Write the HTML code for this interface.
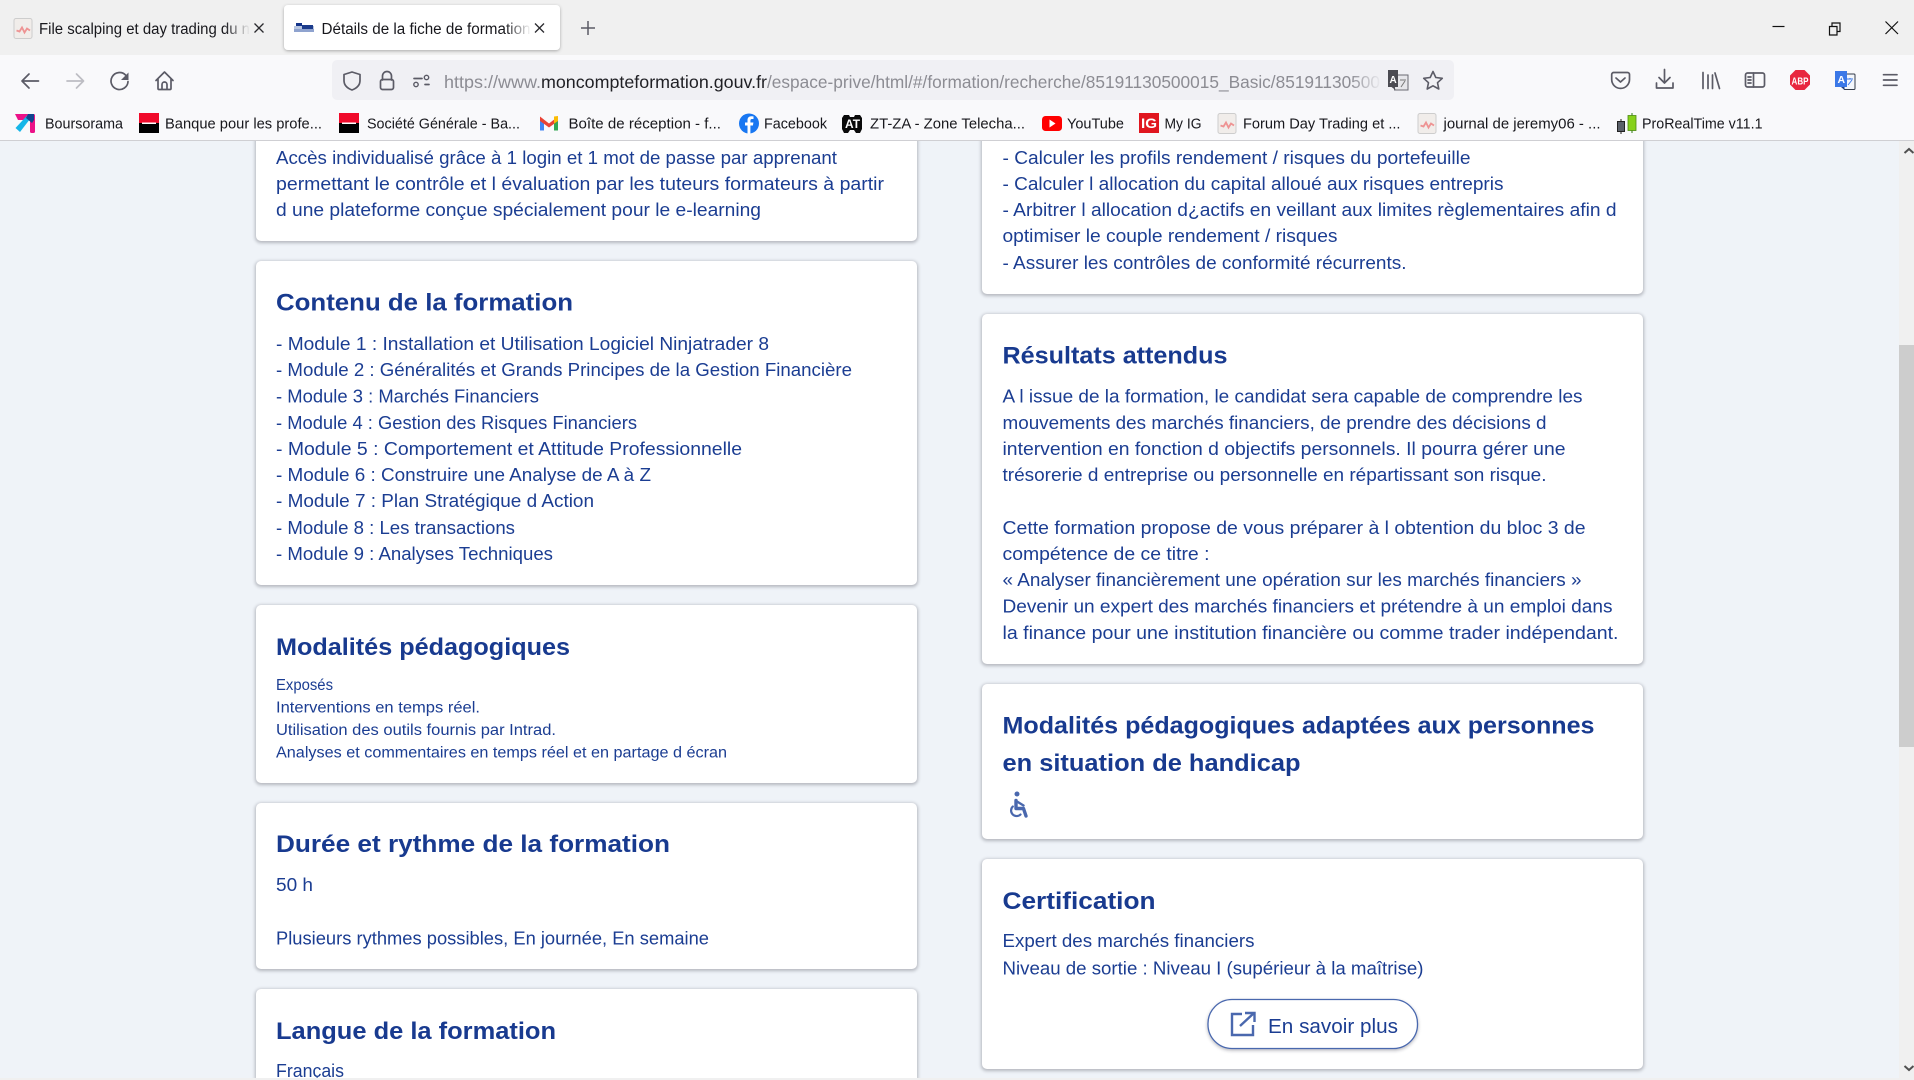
<!DOCTYPE html>
<html lang="fr"><head><meta charset="utf-8"><title>Détails de la fiche de formation</title>
<style>
html,body{margin:0;padding:0;width:1914px;height:1080px;overflow:hidden;background:#eff3f8;font-family:"Liberation Sans",sans-serif}
#p{position:relative;width:1914px;height:1080px;overflow:hidden}
.c{position:absolute;background:#fff;border-radius:5px;box-shadow:0 1px 3px 1px rgba(60,60,70,.32)}
svg#o{position:absolute;left:0;top:0}
text{font-family:"Liberation Sans",sans-serif}
.b text{font-size:18px;fill:#1b3d92}
.s text{font-size:15.5px;fill:#1b3d92}
.h text{font-size:24px;font-weight:bold;fill:#183a8f}
.m text{font-size:15px;fill:#17171c}
.i{fill:none;stroke:#5b5b66;stroke-width:1.7;stroke-linecap:round;stroke-linejoin:round}
.w{fill:none;stroke:#111;stroke-width:1.2}
</style></head><body><div id="p">
<div class="c" style="left:256px;top:120px;width:661px;height:121px"></div>
<div class="c" style="left:256px;top:261px;width:661px;height:324px"></div>
<div class="c" style="left:256px;top:605px;width:661px;height:178px"></div>
<div class="c" style="left:256px;top:803px;width:661px;height:166px"></div>
<div class="c" style="left:256px;top:989px;width:661px;height:89px;border-radius:5px 5px 0 0"></div>
<div class="c" style="left:982px;top:120px;width:661px;height:174px"></div>
<div class="c" style="left:982px;top:314px;width:661px;height:350px"></div>
<div class="c" style="left:982px;top:684px;width:661px;height:155px"></div>
<div class="c" style="left:982px;top:859px;width:661px;height:210px"></div>
<svg id="o" width="1914" height="1080" viewBox="0 0 1914 1080" xmlns="http://www.w3.org/2000/svg">
<defs>
<linearGradient id="f1" x1="0" x2="1"><stop offset="0" stop-color="#f0f0f0" stop-opacity="0"/><stop offset="1" stop-color="#f0f0f0"/></linearGradient>
<linearGradient id="f2" x1="0" x2="1"><stop offset="0" stop-color="#fff" stop-opacity="0"/><stop offset="1" stop-color="#fff"/></linearGradient>
<linearGradient id="f3" x1="0" x2="1"><stop offset="0" stop-color="#f0f0f4" stop-opacity="0"/><stop offset="1" stop-color="#f0f0f4"/></linearGradient>
<filter id="ts" x="-5%" y="-20%" width="110%" height="150%"><feDropShadow dx="0" dy="1" stdDeviation="1.5" flood-color="#000" flood-opacity=".3"/></filter>
<filter id="bs" x="-5%" y="-20%" width="110%" height="150%"><feDropShadow dx="0" dy="1.5" stdDeviation="1.5" flood-color="#334" flood-opacity=".35"/></filter>
<g id="chart"><rect x="0" y="0" width="18" height="20" rx="2" fill="#f1edea" stroke="#cdcdcd"/><path d="M2.500 12l3 1 2.500-4 2.500 5 2.500-4 3 2" fill="none" stroke="#ee9393" stroke-width="1.800"/></g>
</defs>

<!-- contenu gauche -->
<g class="b">
<text x="276" y="164" textLength="561" lengthAdjust="spacingAndGlyphs">Accès individualisé grâce à 1 login et 1 mot de passe par apprenant</text>
<text x="276" y="190" textLength="608" lengthAdjust="spacingAndGlyphs">permettant le contrôle et l évaluation par les tuteurs formateurs à partir</text>
<text x="276" y="216" textLength="485" lengthAdjust="spacingAndGlyphs">d une plateforme conçue spécialement pour le e-learning</text>
<text x="276" y="350" textLength="493" lengthAdjust="spacingAndGlyphs">- Module 1 : Installation et Utilisation Logiciel Ninjatrader 8</text>
<text x="276" y="376" textLength="576" lengthAdjust="spacingAndGlyphs">- Module 2 : Généralités et Grands Principes de la Gestion Financière</text>
<text x="276" y="402.500" textLength="263" lengthAdjust="spacingAndGlyphs">- Module 3 : Marchés Financiers</text>
<text x="276" y="429" textLength="361" lengthAdjust="spacingAndGlyphs">- Module 4 : Gestion des Risques Financiers</text>
<text x="276" y="455" textLength="466" lengthAdjust="spacingAndGlyphs">- Module 5 : Comportement et Attitude Professionnelle</text>
<text x="276" y="481" textLength="375" lengthAdjust="spacingAndGlyphs">- Module 6 : Construire une Analyse de A à Z</text>
<text x="276" y="507" textLength="318" lengthAdjust="spacingAndGlyphs">- Module 7 : Plan Stratégique d Action</text>
<text x="276" y="534" textLength="239" lengthAdjust="spacingAndGlyphs">- Module 8 : Les transactions</text>
<text x="276" y="560" textLength="277" lengthAdjust="spacingAndGlyphs">- Module 9 : Analyses Techniques</text>
<text x="276" y="891" textLength="37" lengthAdjust="spacingAndGlyphs">50 h</text>
<text x="276" y="944.500" textLength="433" lengthAdjust="spacingAndGlyphs">Plusieurs rythmes possibles, En journée, En semaine</text>
<text x="276" y="1077" textLength="68" lengthAdjust="spacingAndGlyphs">Français</text>
</g>
<g class="s">
<text x="276" y="690" textLength="57" lengthAdjust="spacingAndGlyphs">Exposés</text>
<text x="276" y="712.500" textLength="204" lengthAdjust="spacingAndGlyphs">Interventions en temps réel.</text>
<text x="276" y="735" textLength="280" lengthAdjust="spacingAndGlyphs">Utilisation des outils fournis par Intrad.</text>
<text x="276" y="757.500" textLength="451" lengthAdjust="spacingAndGlyphs">Analyses et commentaires en temps réel et en partage d écran</text>
</g>
<g class="h">
<text x="276" y="310.500" textLength="297" lengthAdjust="spacingAndGlyphs">Contenu de la formation</text>
<text x="276" y="655" textLength="294" lengthAdjust="spacingAndGlyphs">Modalités pédagogiques</text>
<text x="276" y="852" textLength="394" lengthAdjust="spacingAndGlyphs">Durée et rythme de la formation</text>
<text x="276" y="1039" textLength="280" lengthAdjust="spacingAndGlyphs">Langue de la formation</text>
</g>

<!-- contenu droite -->
<g class="b">
<text x="1002.500" y="164" textLength="468" lengthAdjust="spacingAndGlyphs">- Calculer les profils rendement / risques du portefeuille</text>
<text x="1002.500" y="190" textLength="501" lengthAdjust="spacingAndGlyphs">- Calculer l allocation du capital alloué aux risques entrepris</text>
<text x="1002.500" y="216" textLength="614" lengthAdjust="spacingAndGlyphs">- Arbitrer l allocation d¿actifs en veillant aux limites règlementaires afin d</text>
<text x="1002.500" y="242" textLength="335" lengthAdjust="spacingAndGlyphs">optimiser le couple rendement / risques</text>
<text x="1002.500" y="269" textLength="404" lengthAdjust="spacingAndGlyphs">- Assurer les contrôles de conformité récurrents.</text>
<text x="1002.500" y="402.500" textLength="580" lengthAdjust="spacingAndGlyphs">A l issue de la formation, le candidat sera capable de comprendre les</text>
<text x="1002.500" y="429" textLength="544" lengthAdjust="spacingAndGlyphs">mouvements des marchés financiers, de prendre des décisions d</text>
<text x="1002.500" y="455" textLength="563" lengthAdjust="spacingAndGlyphs">intervention en fonction d objectifs personnels. Il pourra gérer une</text>
<text x="1002.500" y="481" textLength="544" lengthAdjust="spacingAndGlyphs">trésorerie d entreprise ou personnelle en répartissant son risque.</text>
<text x="1002.500" y="534" textLength="583" lengthAdjust="spacingAndGlyphs">Cette formation propose de vous préparer à l obtention du bloc 3 de</text>
<text x="1002.500" y="560" textLength="207" lengthAdjust="spacingAndGlyphs">compétence de ce titre :</text>
<text x="1002.500" y="586" textLength="579" lengthAdjust="spacingAndGlyphs">« Analyser financièrement une opération sur les marchés financiers »</text>
<text x="1002.500" y="612.500" textLength="610" lengthAdjust="spacingAndGlyphs">Devenir un expert des marchés financiers et prétendre à un emploi dans</text>
<text x="1002.500" y="639" textLength="616" lengthAdjust="spacingAndGlyphs">la finance pour une institution financière ou comme trader indépendant.</text>
<text x="1002.500" y="947" textLength="252" lengthAdjust="spacingAndGlyphs">Expert des marchés financiers</text>
<text x="1002.500" y="974.500" textLength="421" lengthAdjust="spacingAndGlyphs">Niveau de sortie : Niveau I (supérieur à la maîtrise)</text>
</g>
<g class="h">
<text x="1002.500" y="363.500" textLength="225" lengthAdjust="spacingAndGlyphs">Résultats attendus</text>
<text x="1002.500" y="733.500" textLength="592" lengthAdjust="spacingAndGlyphs">Modalités pédagogiques adaptées aux personnes</text>
<text x="1002.500" y="771" textLength="298" lengthAdjust="spacingAndGlyphs">en situation de handicap</text>
<text x="1002.500" y="909" textLength="153" lengthAdjust="spacingAndGlyphs">Certification</text>
</g>
<!-- handicap -->
<g fill="none" stroke="#4a68ae" stroke-linecap="round" stroke-linejoin="round">
<circle cx="1017" cy="794" r="2.500" fill="#4a68ae" stroke="none"/>
<path stroke-width="3.400" d="M1016 800.500v8h7.500l2.500 7.500"/>
<path stroke-width="2.400" d="M1017 801.500l6.500 4"/>
<path stroke-width="2.200" d="M1012.800 806.500a5.500 5.500 0 1 0 7.700 8"/>
</g>
<!-- bouton -->
<rect x="1208" y="999.500" width="209.500" height="49" rx="24" fill="#fff" stroke="#4a68ae" stroke-width="1.300" filter="url(#bs)"/>
<g fill="none" stroke="#4a68ae" stroke-width="2.400"><path d="M1242 1014h-10v21h21v-10"/><path d="M1240 1026l14-13M1245 1013h9.500v9"/></g>
<text x="1268" y="1033" font-size="20" fill="#1b3d92" textLength="130" lengthAdjust="spacingAndGlyphs">En savoir plus</text>

<!-- scrollbar -->
<rect x="1899" y="141" width="15" height="939" fill="#f0f0f0"/>
<rect x="1899" y="345" width="15" height="402" fill="#cdcdcd"/>
<path d="M1904.500 153l4.500-4 4.500 4" fill="none" stroke="#505050" stroke-width="2"/>
<path d="M1904.500 1066l4.500 4 4.500-4" fill="none" stroke="#505050" stroke-width="2"/>
<rect x="0" y="1078" width="1914" height="2" fill="#f0f0f0"/>

<!-- barre d'onglets -->
<rect x="0" y="0" width="1914" height="55" fill="#f0f0f0"/>
<use href="#chart" x="14" y="18.500"/>
<text x="39" y="34" font-size="15.500" fill="#17171c" textLength="211" lengthAdjust="spacingAndGlyphs">File scalping et day trading du n</text>
<rect x="225" y="15" width="25" height="26" fill="url(#f1)"/>
<path d="M254.500 23.500l9 9M263.500 23.500l-9 9" stroke="#2a2a2e" stroke-width="1.300"/>
<rect x="284" y="5" width="276" height="45" rx="4" fill="#fff" filter="url(#ts)"/>
<rect x="294" y="26" width="20" height="3" fill="#b9c6e0"/><rect x="294" y="29" width="20" height="3" fill="#8fa3cf"/><rect x="296" y="23" width="6" height="3" fill="#14348a"/><rect x="302" y="25" width="11" height="4" fill="#1c3c8c"/>
<text x="321.500" y="34" font-size="15.500" fill="#17171c" textLength="209" lengthAdjust="spacingAndGlyphs">Détails de la fiche de formation</text>
<rect x="505" y="15" width="26" height="26" fill="url(#f2)"/>
<path d="M535 23.500l9 9M544 23.500l-9 9" stroke="#2a2a2e" stroke-width="1.300"/>
<path d="M588 21v14M581 28h14" stroke="#5b5b66" stroke-width="1.500"/>
<!-- fenêtre -->
<path d="M1772.500 26.500h12" stroke="#111" stroke-width="1.200"/>
<path class="w" d="M1829.500 26.500h7.500v8.500h-7.500zM1832 26.500v-3.500h8v8.500h-3"/>
<path d="M1885.500 21.500l12.500 12.500M1898 21.500l-12.500 12.500" stroke="#111" stroke-width="1.200"/>

<!-- barre d'outils -->
<rect x="0" y="55" width="1914" height="85" fill="#f9f9fb"/>
<rect x="0" y="140" width="1914" height="1" fill="#cfcfd3"/>
<path class="i" d="M38.500 81H22M29 74l-7 7 7 7"/>
<path class="i" style="stroke:#bdbdc3" d="M67 81h16.500M76.500 74l7 7-7 7"/>
<path class="i" d="M128 81.500a8.500 8.500 0 1 1-2.500-6.500"/><path d="M128.500 72.500v7.500h-7.500z" fill="#5b5b66"/>
<path class="i" d="M156 80.500l8.500-8.500 8.500 8.500M158 79v9.500a1 1 0 0 0 1 1h11a1 1 0 0 0 1-1V79M162 89.500v-5a2.500 2.500 0 0 1 5 0v5"/>
<rect x="332" y="60" width="1122" height="40" rx="5" fill="#f0f0f4"/>
<path class="i" d="M352 72l8 2.500v6c0 5-4 8-8 9.500-4-1.500-8-4.500-8-9.500v-6z"/>
<path class="i" d="M382.500 80v-4a4.500 4.500 0 0 1 9 0v4"/><rect class="i" x="380.500" y="79.500" width="13" height="10" rx="2"/>
<path class="i" d="M414 78.500h8M425 84.500h4"/><circle class="i" cx="426.500" cy="77.500" r="2.200" style="stroke-width:1.400"/><circle class="i" cx="416" cy="84.500" r="2.200" style="stroke-width:1.400"/>
<text x="444" y="88" font-size="17.500" fill="#8c8c93" textLength="97" lengthAdjust="spacingAndGlyphs">https://www.</text>
<text x="541" y="88" font-size="17.500" fill="#1f1f24" textLength="226" lengthAdjust="spacingAndGlyphs">moncompteformation.gouv.fr</text>
<text x="767" y="88" font-size="17.500" fill="#8c8c93" textLength="613" lengthAdjust="spacingAndGlyphs">/espace-prive/html/#/formation/recherche/85191130500015_Basic/85191130500</text>
<rect x="1350" y="62" width="32" height="36" fill="url(#f3)"/>
<!-- traduire (url) -->
<rect x="1394.500" y="75" width="13.500" height="15" fill="#e6e6ea" stroke="#6a6a72"/>
<path d="M1388 70h10v17h-3.500l1 3-4-3h-3.500z" fill="#4b4b52"/><text x="1389.500" y="83" font-size="10" font-weight="bold" fill="#fff">A</text>
<path d="M1400 80h6M1401 87l4-6" stroke="#777" stroke-width="1" fill="none"/>
<path class="i" style="stroke-width:1.600" d="M1433 71.500l2.800 6 6.500.8-4.800 4.400 1.300 6.300-5.800-3.200-5.800 3.200 1.300-6.300-4.800-4.400 6.500-.8z"/>
<!-- droite -->
<path class="i" d="M1613.500 72.500h14a2 2 0 0 1 2 2v5a8.500 8.500 0 0 1-17.800 0v-5a2 2 0 0 1 1.800-2zM1616 78l4.500 4 4.500-4"/>
<path class="i" d="M1664.500 69.500v13M1659 77.500l5.500 5.500 5.500-5.500M1656.500 83v5h16.500v-5"/>
<path class="i" d="M1703 72.500v16M1708 75v13.500M1712.500 75v13.500M1715 73l4.500 15.500"/>
<rect class="i" x="1745.500" y="73" width="19" height="14" rx="2"/><path class="i" d="M1753.500 73v14M1748 77h3M1748 80h3M1748 83h3"/>
<path d="M1795.500 70h9l5.500 5.500v9l-5.500 5.500h-9l-5.500-5.500v-9z" fill="#e8273f"/>
<text x="1791.500" y="84.500" font-size="10.500" font-weight="bold" fill="#fff" textLength="17" lengthAdjust="spacingAndGlyphs">ABP</text>
<rect x="1844" y="74" width="11" height="15.500" rx="1" fill="#f3f6fb" stroke="#333a48"/>
<path d="M1835 71h12v16h-7l-1 0h-4z" fill="#3b78e7"/><path d="M1841 87l3.500 3v-3z" fill="#1f3f80"/>
<text x="1837.500" y="83" font-size="10.500" font-weight="bold" fill="#fff">A</text>
<path d="M1847 79h6M1850 78v1M1848 85l4-5" stroke="#3b78e7" stroke-width="1" fill="none"/>
<path class="i" d="M1883.500 74.700h13.500M1883.500 80h13.500M1883.500 85.300h13.500"/>

<!-- favoris -->
<g>
<path d="M15 114h15l-3 6H18z" fill="#ec1288"/><rect x="30" y="114" width="5" height="19" rx="1.500" fill="#ec1288"/>
<path d="M15.500 128l13-14 5 0.500 -13.500 17.500z" fill="#16b6e8"/><path d="M28 114h6v6l-2 3-6-5z" fill="#12458e"/>
<rect x="139" y="113" width="20" height="20" fill="#000"/><rect x="139" y="113" width="20" height="10" fill="#f00a2a"/><rect x="142" y="122.500" width="14" height="1.500" fill="#fff"/>
<rect x="339" y="113" width="20" height="20" fill="#000"/><rect x="339" y="113" width="20" height="10" fill="#f00a2a"/><rect x="342" y="122.500" width="14" height="1.500" fill="#fff"/>
<path d="M540 117v13.500h4V121z" fill="#4285f4"/><path d="M554 121v9.500h4V117z" fill="#34a853"/><path d="M540 116.500l9 7 9-7v4.500l-9 6.500-9-6.500z" fill="#ea4335"/><path d="M554 116.500l4-.5v5l-4 2.500z" fill="#fbbc04"/>
<circle cx="749" cy="123.500" r="10" fill="#1877f2"/><path d="M747.500 133.500v-8h-2.500v-3h2.500v-2.300c0-2.600 1.500-4 3.800-4l2.200.2v2.600h-1.500c-1.300 0-1.600.8-1.600 1.500v2h3l-.5 3h-2.500v8z" fill="#fff"/>
<path d="M844 115h5l1 2h4l1-2h5l2 3v11l-2 4h-4l-2-3h-4l-2 3h-4l-2-4v-11z" fill="#0a0a0a"/><text x="845" y="128" font-size="12" font-weight="bold" fill="#fff" textLength="15" lengthAdjust="spacingAndGlyphs">AT</text>
<rect x="1042" y="116" width="20" height="15" rx="3.500" fill="#f00"/><path d="M1049.500 119.500l6 4-6 4z" fill="#fff"/>
<rect x="1139" y="113" width="20" height="20" fill="#e0161f"/><text x="1141" y="128" font-size="13.500" font-weight="bold" fill="#fff" textLength="16" lengthAdjust="spacingAndGlyphs">IG</text>
<use href="#chart" x="1218" y="113.500"/>
<use href="#chart" x="1418" y="113.500"/>
<path d="M1621 119v15M1632 113v20" stroke="#2d7a10" stroke-width="1"/>
<path d="M1621 119v15" stroke="#222" stroke-width="1"/>
<rect x="1617.500" y="121.500" width="7" height="10" fill="#5a6069" stroke="#222"/>
<rect x="1628" y="115.500" width="8" height="15" fill="#86d11a" stroke="#4d8a10" stroke-width=".8"/>
</g>
<g class="m">
<text x="45" y="128.500" textLength="78" lengthAdjust="spacingAndGlyphs">Boursorama</text>
<text x="165" y="128.500" textLength="157" lengthAdjust="spacingAndGlyphs">Banque pour les profe...</text>
<text x="367" y="128.500" textLength="153" lengthAdjust="spacingAndGlyphs">Société Générale - Ba...</text>
<text x="568.500" y="128.500" textLength="152.500" lengthAdjust="spacingAndGlyphs">Boîte de réception - f...</text>
<text x="764" y="128.500" textLength="63" lengthAdjust="spacingAndGlyphs">Facebook</text>
<text x="870" y="128.500" textLength="155" lengthAdjust="spacingAndGlyphs">ZT-ZA - Zone Telecha...</text>
<text x="1067" y="128.500" textLength="57" lengthAdjust="spacingAndGlyphs">YouTube</text>
<text x="1164.500" y="128.500" textLength="37" lengthAdjust="spacingAndGlyphs">My IG</text>
<text x="1243" y="128.500" textLength="157.500" lengthAdjust="spacingAndGlyphs">Forum Day Trading et ...</text>
<text x="1443.500" y="128.500" textLength="157" lengthAdjust="spacingAndGlyphs">journal de jeremy06 - ...</text>
<text x="1642" y="128.500" textLength="120.500" lengthAdjust="spacingAndGlyphs">ProRealTime v11.1</text>
</g>
</svg>
</div></body></html>
